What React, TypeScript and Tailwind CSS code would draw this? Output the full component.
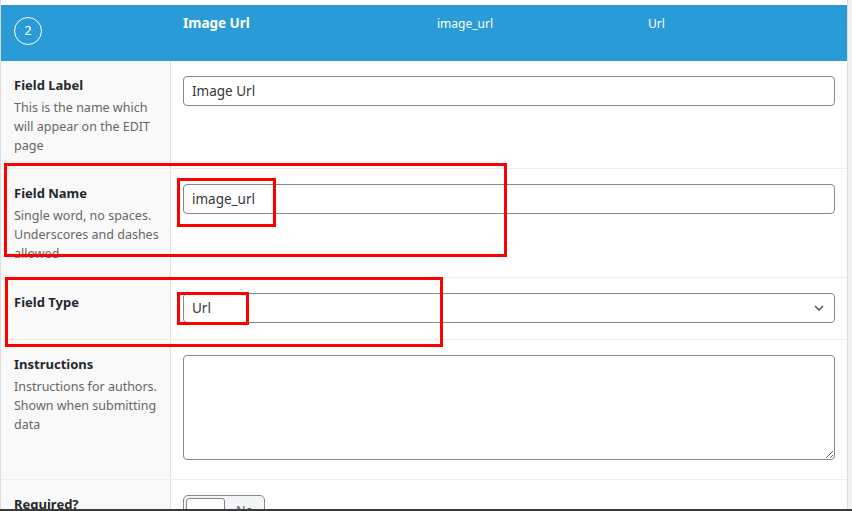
import React from 'react';

const font = { fontFamily: '"Noto Sans", "Open Sans", Arial, sans-serif' };

interface FieldRowProps {
  label: string;
  description?: string[];
  height: string;
  children: React.ReactNode;
}

function FieldRow({ label, description, height, children }: FieldRowProps) {
  return (
    <div className={`flex shrink-0 border-b border-[#eeeeee] ${height}`}>
      <div className="w-[170px] shrink-0 bg-[#f9f9f9] border-r border-[#e1e1e1] pl-[13px] pr-2 pt-[15px]">
        <div className="text-[13px] leading-[19px] font-bold text-[#23282d]">{label}</div>
        {description && (
          <div className="mt-[3px] text-[12.5px] leading-[19px] text-[#666666]">
            {description.map((line) => (
              <div key={line}>{line}</div>
            ))}
          </div>
        )}
      </div>
      <div className="flex-1 pl-[12px] pr-[12px] pt-[15px]">{children}</div>
    </div>
  );
}

function TextInput({ value }: { value: string }) {
  return (
    <div className="h-[30px] w-full rounded-[4px] border border-[#7e8993] bg-white flex items-center px-[8px] text-[13.5px] text-[#32373c]">
      {value}
    </div>
  );
}

export default function App() {
  return (
    <div className="w-[852px] h-[511px] overflow-hidden flex flex-col bg-[#f1f1f1]" style={font}>
      <div className="relative flex h-[509px] shrink-0 overflow-hidden">
        <div className="w-[847px] shrink-0 bg-white border-l border-[#dcdcdc] flex flex-col">
          <div className="h-[5px] shrink-0" />
          {/* header */}
          <div className="h-[56px] shrink-0 bg-[#299bd7] flex text-white">
            <div className="w-[170px] shrink-0 pl-[13px] pt-[12px]">
              <div className="w-[28px] h-[28px] rounded-full border border-white flex items-center justify-center text-[13px]">
                2
              </div>
            </div>
            <div className="w-[266px] shrink-0 pl-[12px] pt-[9px] text-[13.5px] leading-[19px] font-bold">Image Url</div>
            <div className="w-[211px] shrink-0 pt-[9px] text-[12px] leading-[19px]">image_url</div>
            <div className="pt-[9px] text-[12px] leading-[19px]">Url</div>
          </div>

          <FieldRow
            label="Field Label"
            description={['This is the name which', 'will appear on the EDIT', 'page']}
            height="h-[108px]"
          >
            <TextInput value="Image Url" />
          </FieldRow>

          <FieldRow
            label="Field Name"
            description={['Single word, no spaces.', 'Underscores and dashes', 'allowed']}
            height="h-[109px]"
          >
            <TextInput value="image_url" />
          </FieldRow>

          <FieldRow label="Field Type" height="h-[62px]">
            <div className="h-[30px] w-full rounded-[4px] border border-[#7e8993] bg-white flex items-center justify-between pl-[8px] pr-[10px] text-[13.5px] text-[#32373c]">
              <span>Url</span>
              <svg width="10" height="6" viewBox="0 0 10 6" fill="none">
                <path d="M1 1l4 4 4-4" stroke="#50575e" strokeWidth="1.5" />
              </svg>
            </div>
          </FieldRow>

          <FieldRow
            label="Instructions"
            description={['Instructions for authors.', 'Shown when submitting', 'data']}
            height="h-[140px]"
          >
            <textarea
              readOnly
              className="block w-full h-[105px] rounded-[4px] border border-[#7e8993] bg-white resize-y"
            />
          </FieldRow>

          <FieldRow label="Required?" height="h-[60px]">
            <div className="w-[82px] h-[30px] rounded-[5px] border border-[#7e8993] bg-[#f3f5f6] flex items-start pt-[2px] pl-[2px] gap-[11px]">
              <div className="w-[39px] h-[24px] rounded-[3px] border border-[#7e8993] bg-white" />
              <span className="text-[12.5px] leading-[26px] text-[#50575e]">No</span>
            </div>
          </FieldRow>
        </div>
        <div className="flex-1 border-l border-[#dddddd] bg-[#f1f1f1]" />

        {/* red highlight boxes */}
        <div className="absolute left-[4px] top-[163px] w-[503px] h-[94px] border-[3px] border-[#ff0000]" />
        <div className="absolute left-[177px] top-[178px] w-[99px] h-[49px] border-[3px] border-[#ff0000]" />
        <div className="absolute left-[5px] top-[277px] w-[438px] h-[70px] border-[3px] border-[#ff0000]" />
        <div className="absolute left-[177px] top-[292px] w-[72px] h-[33px] border-[3px] border-[#ff0000]" />
      </div>
      <div className="h-[2px] shrink-0 bg-[#3a3a3a]" />
    </div>
  );
}
